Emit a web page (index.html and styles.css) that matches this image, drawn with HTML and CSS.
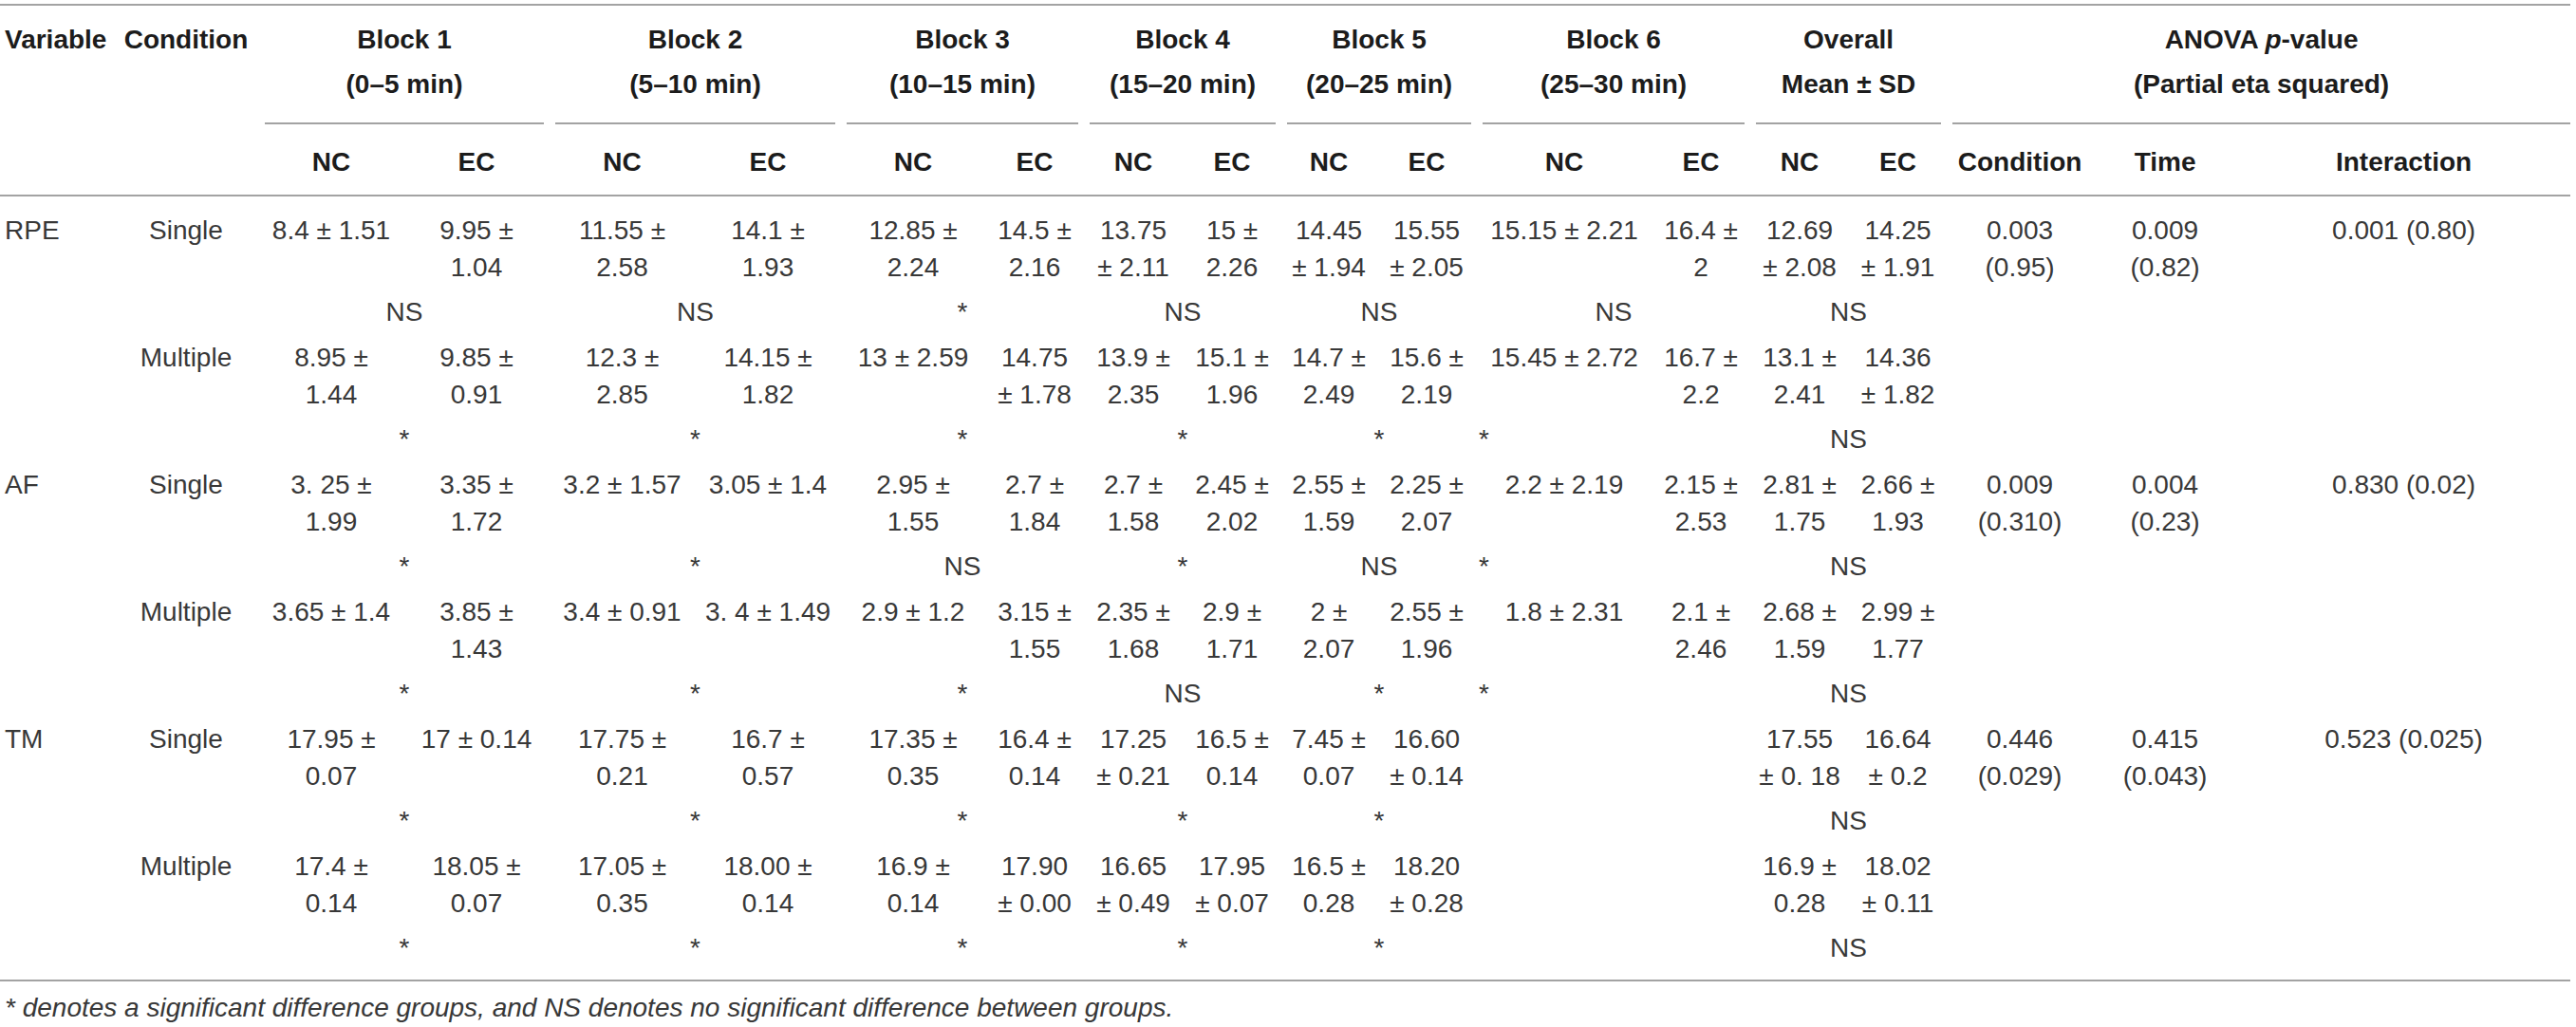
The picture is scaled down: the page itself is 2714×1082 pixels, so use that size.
FILE: index.html
```html
<!DOCTYPE html>
<html lang="en">
<head>
    <meta charset="UTF-8">
    <meta name="viewport" content="width=device-width, initial-scale=1.0">
    <title>RPE, AF and TM by block and condition</title>
    <link rel="stylesheet" href="styles.css">
</head>
<body>
    <div class="table-wrap">
        <table class="results">
            <colgroup>
                <col class="c-var">
                <col class="c-cond">
                <col class="c-b1n"><col class="c-b1e">
                <col class="c-b2n"><col class="c-b2e">
                <col class="c-b3n"><col class="c-b3e">
                <col class="c-b4n"><col class="c-b4e">
                <col class="c-b5n"><col class="c-b5e">
                <col class="c-b6n"><col class="c-b6e">
                <col class="c-ovn"><col class="c-ove">
                <col class="c-acond"><col class="c-atime"><col class="c-aint">
            </colgroup>
            <thead>
                <tr class="head-top">
                    <th rowspan="2" class="head-var">Variable</th>
                    <th rowspan="2" class="head-cond">Condition</th>
                    <th colspan="2" class="group"><span class="group-label">Block 1<br>(0–5 min)</span></th>
                    <th colspan="2" class="group"><span class="group-label">Block 2<br>(5–10 min)</span></th>
                    <th colspan="2" class="group"><span class="group-label">Block 3<br>(10–15 min)</span></th>
                    <th colspan="2" class="group"><span class="group-label">Block 4<br>(15–20 min)</span></th>
                    <th colspan="2" class="group"><span class="group-label">Block 5<br>(20–25 min)</span></th>
                    <th colspan="2" class="group"><span class="group-label">Block 6<br>(25–30 min)</span></th>
                    <th colspan="2" class="group"><span class="group-label">Overall<br>Mean ± SD</span></th>
                    <th colspan="3" class="group group-last"><span class="group-label">ANOVA <em>p</em>-value<br>(Partial eta squared)</span></th>
                </tr>
                <tr class="head-sub">
                    <th>NC</th><th>EC</th>
                    <th>NC</th><th>EC</th>
                    <th>NC</th><th>EC</th>
                    <th>NC</th><th>EC</th>
                    <th>NC</th><th>EC</th>
                    <th>NC</th><th>EC</th>
                    <th>NC</th><th>EC</th>
                    <th>Condition</th><th>Time</th><th>Interaction</th>
                </tr>
            </thead>
            <tbody>
                <!-- RPE -->
                <tr class="data first">
                    <td class="var">RPE</td><td>Single</td>
                    <td>8.4 ± 1.51</td><td>9.95 ±<br>1.04</td>
                    <td>11.55 ±<br>2.58</td><td>14.1 ±<br>1.93</td>
                    <td>12.85 ±<br>2.24</td><td>14.5 ±<br>2.16</td>
                    <td>13.75<br>± 2.11</td><td>15 ±<br>2.26</td>
                    <td>14.45<br>± 1.94</td><td>15.55<br>± 2.05</td>
                    <td>15.15 ± 2.21</td><td>16.4 ±<br>2</td>
                    <td>12.69<br>± 2.08</td><td>14.25<br>± 1.91</td>
                    <td>0.003<br>(0.95)</td><td>0.009<br>(0.82)</td><td>0.001 (0.80)</td>
                </tr>
                <tr class="sig">
                    <td></td><td></td>
                    <td colspan="2">NS</td><td colspan="2">NS</td><td colspan="2">*</td>
                    <td colspan="2">NS</td><td colspan="2">NS</td><td colspan="2">NS</td>
                    <td colspan="2">NS</td>
                    <td></td><td></td><td></td>
                </tr>
                <tr class="data">
                    <td class="var"></td><td>Multiple</td>
                    <td>8.95 ±<br>1.44</td><td>9.85 ±<br>0.91</td>
                    <td>12.3 ±<br>2.85</td><td>14.15 ±<br>1.82</td>
                    <td>13 ± 2.59</td><td>14.75<br>± 1.78</td>
                    <td>13.9 ±<br>2.35</td><td>15.1 ±<br>1.96</td>
                    <td>14.7 ±<br>2.49</td><td>15.6 ±<br>2.19</td>
                    <td>15.45 ± 2.72</td><td>16.7 ±<br>2.2</td>
                    <td>13.1 ±<br>2.41</td><td>14.36<br>± 1.82</td>
                    <td></td><td></td><td></td>
                </tr>
                <tr class="sig">
                    <td></td><td></td>
                    <td colspan="2">*</td><td colspan="2">*</td><td colspan="2">*</td>
                    <td colspan="2">*</td><td colspan="2">*</td><td colspan="2" class="sig-left">*</td>
                    <td colspan="2">NS</td>
                    <td></td><td></td><td></td>
                </tr>

                <!-- AF -->
                <tr class="data">
                    <td class="var">AF</td><td>Single</td>
                    <td>3. 25 ±<br>1.99</td><td>3.35 ±<br>1.72</td>
                    <td>3.2 ± 1.57</td><td>3.05 ± 1.4</td>
                    <td>2.95 ±<br>1.55</td><td>2.7 ±<br>1.84</td>
                    <td>2.7 ±<br>1.58</td><td>2.45 ±<br>2.02</td>
                    <td>2.55 ±<br>1.59</td><td>2.25 ±<br>2.07</td>
                    <td>2.2 ± 2.19</td><td>2.15 ±<br>2.53</td>
                    <td>2.81 ±<br>1.75</td><td>2.66 ±<br>1.93</td>
                    <td>0.009<br>(0.310)</td><td>0.004<br>(0.23)</td><td>0.830 (0.02)</td>
                </tr>
                <tr class="sig">
                    <td></td><td></td>
                    <td colspan="2">*</td><td colspan="2">*</td><td colspan="2">NS</td>
                    <td colspan="2">*</td><td colspan="2">NS</td><td colspan="2" class="sig-left">*</td>
                    <td colspan="2">NS</td>
                    <td></td><td></td><td></td>
                </tr>
                <tr class="data">
                    <td class="var"></td><td>Multiple</td>
                    <td>3.65 ± 1.4</td><td>3.85 ±<br>1.43</td>
                    <td>3.4 ± 0.91</td><td>3. 4 ± 1.49</td>
                    <td>2.9 ± 1.2</td><td>3.15 ±<br>1.55</td>
                    <td>2.35 ±<br>1.68</td><td>2.9 ±<br>1.71</td>
                    <td>2 ±<br>2.07</td><td>2.55 ±<br>1.96</td>
                    <td>1.8 ± 2.31</td><td>2.1 ±<br>2.46</td>
                    <td>2.68 ±<br>1.59</td><td>2.99 ±<br>1.77</td>
                    <td></td><td></td><td></td>
                </tr>
                <tr class="sig">
                    <td></td><td></td>
                    <td colspan="2">*</td><td colspan="2">*</td><td colspan="2">*</td>
                    <td colspan="2">NS</td><td colspan="2">*</td><td colspan="2" class="sig-left">*</td>
                    <td colspan="2">NS</td>
                    <td></td><td></td><td></td>
                </tr>

                <!-- TM -->
                <tr class="data">
                    <td class="var">TM</td><td>Single</td>
                    <td>17.95 ±<br>0.07</td><td>17 ± 0.14</td>
                    <td>17.75 ±<br>0.21</td><td>16.7 ±<br>0.57</td>
                    <td>17.35 ±<br>0.35</td><td>16.4 ±<br>0.14</td>
                    <td>17.25<br>± 0.21</td><td>16.5 ±<br>0.14</td>
                    <td>7.45 ±<br>0.07</td><td>16.60<br>± 0.14</td>
                    <td></td><td></td>
                    <td>17.55<br>± 0. 18</td><td>16.64<br>± 0.2</td>
                    <td>0.446<br>(0.029)</td><td>0.415<br>(0.043)</td><td>0.523 (0.025)</td>
                </tr>
                <tr class="sig">
                    <td></td><td></td>
                    <td colspan="2">*</td><td colspan="2">*</td><td colspan="2">*</td>
                    <td colspan="2">*</td><td colspan="2">*</td><td colspan="2"></td>
                    <td colspan="2">NS</td>
                    <td></td><td></td><td></td>
                </tr>
                <tr class="data">
                    <td class="var"></td><td>Multiple</td>
                    <td>17.4 ±<br>0.14</td><td>18.05 ±<br>0.07</td>
                    <td>17.05 ±<br>0.35</td><td>18.00 ±<br>0.14</td>
                    <td>16.9 ±<br>0.14</td><td>17.90<br>± 0.00</td>
                    <td>16.65<br>± 0.49</td><td>17.95<br>± 0.07</td>
                    <td>16.5 ±<br>0.28</td><td>18.20<br>± 0.28</td>
                    <td></td><td></td>
                    <td>16.9 ±<br>0.28</td><td>18.02<br>± 0.11</td>
                    <td></td><td></td><td></td>
                </tr>
                <tr class="sig last">
                    <td></td><td></td>
                    <td colspan="2">*</td><td colspan="2">*</td><td colspan="2">*</td>
                    <td colspan="2">*</td><td colspan="2">*</td><td colspan="2"></td>
                    <td colspan="2">NS</td>
                    <td></td><td></td><td></td>
                </tr>
            </tbody>
        </table>

        <p class="footnote">* denotes a significant difference groups, and NS denotes no significant difference between groups.</p>
    </div>
</body>
</html>
```

FILE: styles.css
```css
* {
    margin: 0;
    padding: 0;
    box-sizing: border-box;
}

body {
    font-family: 'Liberation Sans', Arial, Helvetica, sans-serif;
    color: #383838;
    background: #fff;
}

.table-wrap {
    padding-top: 4px;
    width: 2708px;
}

.results {
    width: 2708px;
    table-layout: fixed;
    border-collapse: separate;
    border-spacing: 0;
    border-top: 2px solid #a3a3a3;
    border-bottom: 2px solid #a3a3a3;
    font-size: 28px;
}

/* column widths */
.c-var { width: 119px; }
.c-cond { width: 154px; }
.c-b1n { width: 152px; }
.c-b1e { width: 154px; }
.c-b2n { width: 153px; }
.c-b2e { width: 154px; }
.c-b3n { width: 152px; }
.c-b3e { width: 104px; }
.c-b4n { width: 104px; }
.c-b4e { width: 104px; }
.c-b5n { width: 100px; }
.c-b5e { width: 106px; }
.c-b6n { width: 184px; }
.c-b6e { width: 104px; }
.c-ovn { width: 104px; }
.c-ove { width: 103px; }
.c-acond { width: 154px; }
.c-atime { width: 152px; }
.c-aint { width: 351px; }

/* header */
.results th {
    font-weight: bold;
    color: #1c1c1c;
    line-height: 47px;
    text-align: center;
    vertical-align: top;
    white-space: nowrap;
}

.head-top th {
    padding-top: 12px;
}

.head-var,
.head-cond {
    border-bottom: 2px solid #a3a3a3;
}

.results th.head-var {
    text-align: left;
    padding-left: 5px;
}

.group-label {
    display: block;
    margin: 0 6px;
    padding-bottom: 17px;
    border-bottom: 2px solid #a3a3a3;
}

.group-last .group-label {
    margin-right: 0;
}

.head-sub th {
    padding: 16px 0 11px;
    border-bottom: 2px solid #a3a3a3;
}

.group-label em {
    font-style: italic;
}

/* body */
.results td {
    line-height: 39px;
    text-align: center;
    vertical-align: top;
    white-space: nowrap;
}

.data td {
    padding: 4px 0;
}

.data.first td {
    padding-top: 16px;
}

.sig td {
    padding: 4px 0 5px;
}

.sig.last td {
    padding-bottom: 14px;
}

.results td.var {
    text-align: left;
    padding-left: 5px;
}

.results td.sig-left {
    text-align: left;
    padding-left: 2px;
}

.footnote {
    margin-top: 8px;
    padding-left: 5px;
    font-size: 28px;
    line-height: 39px;
    font-style: italic;
    color: #383838;
}
```
